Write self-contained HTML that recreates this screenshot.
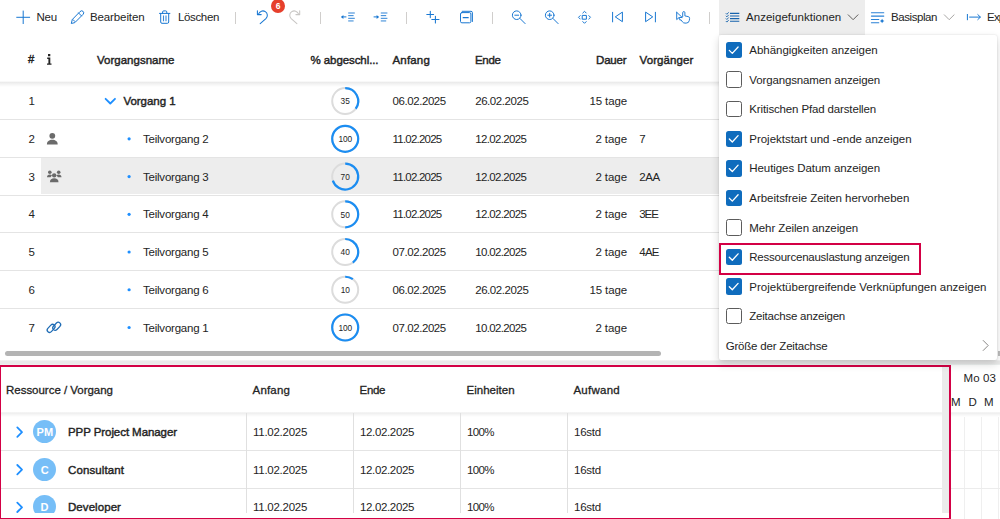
<!DOCTYPE html>
<html lang="de"><head><meta charset="utf-8"><title>Ressourcenauslastung anzeigen</title>
<style>
*{box-sizing:border-box}
html,body{margin:0;padding:0}
body{width:1000px;height:519px;overflow:hidden;position:relative;background:#fff;font-family:"Liberation Sans",sans-serif;color:#242424}
.abs,.t{position:absolute}
.t{line-height:16px;white-space:nowrap}
.sb{-webkit-text-stroke:0.42px currentColor}
.lh{-webkit-text-stroke:0.3px currentColor}
svg{position:absolute;left:0;top:0;overflow:visible}
.sep{position:absolute;top:11.5px;width:1px;height:12px;background:#d0cecc}
.rl{position:absolute;left:0;height:1px;background:#e4e4e4}
.cb{position:absolute;left:725.5px;width:16.5px;height:16.5px;border-radius:2.5px}
.cb.on{background:#0f6cbd}
.cb.off{border:1.2px solid #5c5c5c;background:#fff}
</style></head>
<body>
<div class="abs" style="left:719px;top:0;width:145.5px;height:35px;background:#ededed"></div>
<div class="sep" style="left:234.5px"></div>
<div class="sep" style="left:320.0px"></div>
<div class="sep" style="left:405.5px"></div>
<div class="sep" style="left:491.5px"></div>
<div class="sep" style="left:708.5px"></div>
<div class="abs" style="left:271.3px;top:-0.9px;width:13.8px;height:13.8px;border-radius:50%;background:#e63f2c"></div>
<div class="abs" style="left:0;top:81.2px;width:719px;height:6px;background:linear-gradient(#fff 0,#ebebeb 24%,#f3f3f3 50%,#fff 100%)"></div>
<div class="abs" style="left:41px;top:157.60px;width:678px;height:36.90px;background:#ededed"></div>
<div class="rl" style="top:118.50px;width:719px"></div>
<div class="rl" style="top:156.60px;width:719px"></div>
<div class="rl" style="top:194.50px;width:719px"></div>
<div class="rl" style="top:232.30px;width:719px"></div>
<div class="rl" style="top:270.20px;width:719px"></div>
<div class="rl" style="top:308.00px;width:719px"></div>
<div class="abs" style="left:5.2px;top:350.8px;width:656px;height:4.9px;border-radius:2.5px;background:#b4b4b4"></div>
<div class="abs" style="left:0;top:360.2px;width:1000px;height:5px;background:linear-gradient(#f6f6f6,#eaeaea 25%,#eaeaea 80%,#f0f7f5)"></div>
<div class="abs" style="left:950px;top:366px;width:50px;height:153px;background:#fff"></div>
<div class="abs" style="left:964.2px;top:413px;width:1px;height:106px;background:#efefef"></div>
<div class="abs" style="left:980.8px;top:413px;width:1px;height:106px;background:#efefef"></div>
<div class="abs" style="left:997.5px;top:413px;width:1px;height:106px;background:#efefef"></div>
<div class="abs" style="left:997.5px;top:351px;width:3px;height:4.6px;background:#bdbdbd"></div>
<div class="abs" style="left:0;top:365px;width:950.5px;height:153.5px;background:#fff"></div>
<div class="abs" style="left:0;top:412.4px;width:943px;height:5px;background:linear-gradient(#fff 0,#ededed 16%,#f5f5f5 50%,#fff 100%)"></div>
<div class="abs" style="left:950px;top:412.4px;width:50px;height:5px;background:linear-gradient(#fff 0,#ededed 16%,#f5f5f5 50%,#fff 100%)"></div>
<div class="rl" style="top:449.7px;width:943px"></div>
<div class="rl" style="top:449.7px;left:950px;width:50px;background:#ececec"></div>
<div class="rl" style="top:487.7px;width:943px"></div>
<div class="rl" style="top:487.7px;left:950px;width:50px;background:#ececec"></div>
<div class="abs" style="left:245.9px;top:413px;width:1px;height:100px;background:#e0e0e0"></div>
<div class="abs" style="left:353.1px;top:413px;width:1px;height:100px;background:#e0e0e0"></div>
<div class="abs" style="left:459.9px;top:413px;width:1px;height:100px;background:#e0e0e0"></div>
<div class="abs" style="left:566.9px;top:413px;width:1px;height:100px;background:#e0e0e0"></div>
<div class="abs" style="left:942.2px;top:366px;width:6.4px;height:151px;background:#ebebeb"></div>
<div class="abs" role="region" aria-label="Ressourcenauslastung" style="left:0;top:0;width:950px;height:513px;overflow:hidden"><div class="abs" style="left:33px;top:420.10px;width:23.2px;height:23.2px;border-radius:50%;background:#76bef7"></div><div class="abs" style="left:33px;top:457.70px;width:23.2px;height:23.2px;border-radius:50%;background:#76bef7"></div><div class="abs" style="left:33px;top:495.30px;width:23.2px;height:23.2px;border-radius:50%;background:#76bef7"></div><span class="t sb" style="left:68.0px;top:424.13px;font-size:11.5px;letter-spacing:-0.072px;">PPP Project Manager</span><span class="t" style="left:253.0px;top:424.13px;font-size:11.5px;letter-spacing:-0.270px;">11.02.2025</span><span class="t" style="left:360.0px;top:424.13px;font-size:11.5px;letter-spacing:-0.356px;">12.02.2025</span><span class="t" style="left:467.0px;top:424.13px;font-size:11.5px;letter-spacing:-0.605px;">100%</span><span class="t" style="left:574.0px;top:424.13px;font-size:11.5px;letter-spacing:-0.228px;">16std</span><span class="t" style="left:36.5px;top:424.23px;font-size:11px;font-weight:700;color:#fff;letter-spacing:0.150px;">PM</span><span class="t sb" style="left:68.0px;top:461.73px;font-size:11.5px;letter-spacing:0.102px;">Consultant</span><span class="t" style="left:253.0px;top:461.73px;font-size:11.5px;letter-spacing:-0.270px;">11.02.2025</span><span class="t" style="left:360.0px;top:461.73px;font-size:11.5px;letter-spacing:-0.356px;">12.02.2025</span><span class="t" style="left:467.0px;top:461.73px;font-size:11.5px;letter-spacing:-0.605px;">100%</span><span class="t" style="left:574.0px;top:461.73px;font-size:11.5px;letter-spacing:-0.228px;">16std</span><span class="t" style="left:40.7px;top:461.83px;font-size:11px;font-weight:700;color:#fff;">C</span><span class="t sb" style="left:68.0px;top:499.33px;font-size:11.5px;letter-spacing:0.064px;">Developer</span><span class="t" style="left:253.0px;top:499.33px;font-size:11.5px;letter-spacing:-0.270px;">11.02.2025</span><span class="t" style="left:360.0px;top:499.33px;font-size:11.5px;letter-spacing:-0.356px;">12.02.2025</span><span class="t" style="left:467.0px;top:499.33px;font-size:11.5px;letter-spacing:-0.605px;">100%</span><span class="t" style="left:574.0px;top:499.33px;font-size:11.5px;letter-spacing:-0.228px;">16std</span><span class="t" style="left:40.5px;top:499.43px;font-size:11px;font-weight:700;color:#fff;">D</span></div>
<div class="abs" style="left:1.5px;top:513px;width:947px;height:4px;background:#fff"></div>
<div class="abs" style="left:-1px;top:364.9px;width:952px;height:154.7px;border:2px solid #d30045"></div>
<div class="abs" style="left:719px;top:35px;width:277.5px;height:325px;background:#fff;border-radius:2px;box-shadow:0 0 2px rgba(0,0,0,.14),0 4px 9px rgba(0,0,0,.16)"></div>
<div class="cb on" style="top:41.88px"></div>
<div class="cb off" style="top:71.43px"></div>
<div class="cb off" style="top:100.98px"></div>
<div class="cb on" style="top:130.53px"></div>
<div class="cb on" style="top:160.08px"></div>
<div class="cb on" style="top:189.63px"></div>
<div class="cb off" style="top:219.18px"></div>
<div class="cb on" style="top:248.72px"></div>
<div class="cb on" style="top:278.27px"></div>
<div class="cb off" style="top:307.82px"></div>
<div class="abs" style="left:718.9px;top:243px;width:201.9px;height:32.4px;border:2px solid #d30045"></div>
<div role="toolbar" aria-label="Werkzeugleiste"><span class="t" style="left:36.5px;top:9.43px;font-size:11.5px;letter-spacing:-0.203px;">Neu</span><span class="t" style="left:90.0px;top:9.43px;font-size:11.5px;letter-spacing:-0.113px;">Bearbeiten</span><span class="t" style="left:178.0px;top:9.43px;font-size:11.5px;letter-spacing:-0.355px;">Löschen</span><span class="t" style="left:746.0px;top:9.43px;font-size:11.5px;letter-spacing:0.039px;">Anzeigefunktionen</span><span class="t" style="left:891.0px;top:9.43px;font-size:11.5px;letter-spacing:-0.431px;">Basisplan</span><span class="t" style="left:987.0px;top:9.43px;font-size:11.5px;letter-spacing:-0.792px;">Export</span><span class="t" style="left:275.8px;top:-1.60px;font-size:8.5px;font-weight:700;color:#fff;">6</span></div>
<div role="grid" aria-label="Vorgänge"><span class="t sb" style="left:28.0px;top:50.83px;font-size:11.3px;">#</span><span class="t sb" style="left:97.0px;top:51.53px;font-size:11.5px;letter-spacing:0.010px;">Vorgangsname</span><span class="t sb" style="left:310.5px;top:51.53px;font-size:11.5px;letter-spacing:-0.081px;">% abgeschl...</span><span class="t sb" style="left:392.5px;top:51.53px;font-size:11.5px;letter-spacing:0.174px;">Anfang</span><span class="t sb" style="left:475.0px;top:51.53px;font-size:11.5px;letter-spacing:-0.340px;">Ende</span><span class="t sb" style="left:596.0px;top:51.53px;font-size:11.5px;letter-spacing:-0.166px;">Dauer</span><span class="t sb" style="left:639.5px;top:51.53px;font-size:11.5px;letter-spacing:0.102px;">Vorgänger</span><span class="t" style="left:28.5px;top:93.23px;font-size:11.5px;">1</span><span class="t sb" style="left:123.5px;top:93.23px;font-size:11.5px;letter-spacing:-0.049px;">Vorgang 1</span><span class="t" style="left:392.6px;top:93.23px;font-size:11.5px;letter-spacing:-0.436px;">06.02.2025</span><span class="t" style="left:475.2px;top:93.23px;font-size:11.5px;letter-spacing:-0.436px;">26.02.2025</span><span class="t" style="left:589.5px;top:93.23px;font-size:11.5px;letter-spacing:-0.125px;">15 tage</span><span class="t" style="left:340.4px;top:93.40px;font-size:8.3px;letter-spacing:0.133px;">35</span><span class="t" style="left:28.5px;top:130.96px;font-size:11.5px;">2</span><span class="t" style="left:143.0px;top:130.96px;font-size:11.5px;letter-spacing:-0.224px;">Teilvorgang 2</span><span class="t" style="left:392.6px;top:130.96px;font-size:11.5px;letter-spacing:-0.790px;">11.02.2025</span><span class="t" style="left:475.2px;top:130.96px;font-size:11.5px;letter-spacing:-0.636px;">12.02.2025</span><span class="t" style="left:595.4px;top:130.96px;font-size:11.5px;letter-spacing:-0.064px;">2 tage</span><span class="t" style="left:639.3px;top:130.96px;font-size:11.5px;">7</span><span class="t" style="left:338.4px;top:131.13px;font-size:8.3px;letter-spacing:-0.115px;">100</span><span class="t" style="left:28.5px;top:168.69px;font-size:11.5px;">3</span><span class="t" style="left:143.0px;top:168.69px;font-size:11.5px;letter-spacing:-0.224px;">Teilvorgang 3</span><span class="t" style="left:392.6px;top:168.69px;font-size:11.5px;letter-spacing:-0.790px;">11.02.2025</span><span class="t" style="left:475.2px;top:168.69px;font-size:11.5px;letter-spacing:-0.636px;">12.02.2025</span><span class="t" style="left:595.4px;top:168.69px;font-size:11.5px;letter-spacing:-0.064px;">2 tage</span><span class="t" style="left:639.3px;top:168.69px;font-size:11.5px;letter-spacing:-0.417px;">2AA</span><span class="t" style="left:340.4px;top:168.86px;font-size:8.3px;letter-spacing:0.133px;">70</span><span class="t" style="left:28.5px;top:206.42px;font-size:11.5px;">4</span><span class="t" style="left:143.0px;top:206.42px;font-size:11.5px;letter-spacing:-0.224px;">Teilvorgang 4</span><span class="t" style="left:392.6px;top:206.42px;font-size:11.5px;letter-spacing:-0.790px;">11.02.2025</span><span class="t" style="left:475.2px;top:206.42px;font-size:11.5px;letter-spacing:-0.636px;">12.02.2025</span><span class="t" style="left:595.4px;top:206.42px;font-size:11.5px;letter-spacing:-0.064px;">2 tage</span><span class="t" style="left:639.3px;top:206.42px;font-size:11.5px;letter-spacing:-1.083px;">3EE</span><span class="t" style="left:340.4px;top:206.59px;font-size:8.3px;letter-spacing:0.133px;">50</span><span class="t" style="left:28.5px;top:244.15px;font-size:11.5px;">5</span><span class="t" style="left:143.0px;top:244.15px;font-size:11.5px;letter-spacing:-0.224px;">Teilvorgang 5</span><span class="t" style="left:392.6px;top:244.15px;font-size:11.5px;letter-spacing:-0.436px;">07.02.2025</span><span class="t" style="left:475.2px;top:244.15px;font-size:11.5px;letter-spacing:-0.636px;">10.02.2025</span><span class="t" style="left:595.4px;top:244.15px;font-size:11.5px;letter-spacing:-0.064px;">2 tage</span><span class="t" style="left:639.3px;top:244.15px;font-size:11.5px;letter-spacing:-0.750px;">4AE</span><span class="t" style="left:340.4px;top:244.32px;font-size:8.3px;letter-spacing:0.133px;">40</span><span class="t" style="left:28.5px;top:281.88px;font-size:11.5px;">6</span><span class="t" style="left:143.0px;top:281.88px;font-size:11.5px;letter-spacing:-0.224px;">Teilvorgang 6</span><span class="t" style="left:392.6px;top:281.88px;font-size:11.5px;letter-spacing:-0.436px;">06.02.2025</span><span class="t" style="left:475.2px;top:281.88px;font-size:11.5px;letter-spacing:-0.436px;">26.02.2025</span><span class="t" style="left:589.5px;top:281.88px;font-size:11.5px;letter-spacing:-0.125px;">15 tage</span><span class="t" style="left:340.7px;top:282.05px;font-size:8.3px;letter-spacing:-0.117px;">10</span><span class="t" style="left:28.5px;top:319.61px;font-size:11.5px;">7</span><span class="t" style="left:143.0px;top:319.61px;font-size:11.5px;letter-spacing:-0.224px;">Teilvorgang 1</span><span class="t" style="left:392.6px;top:319.61px;font-size:11.5px;letter-spacing:-0.436px;">07.02.2025</span><span class="t" style="left:475.2px;top:319.61px;font-size:11.5px;letter-spacing:-0.636px;">10.02.2025</span><span class="t" style="left:595.4px;top:319.61px;font-size:11.5px;letter-spacing:-0.064px;">2 tage</span><span class="t" style="left:338.4px;top:319.78px;font-size:8.3px;letter-spacing:-0.115px;">100</span></div>
<div aria-label="Zeitachse"><span class="t lh" style="left:6.0px;top:382.43px;font-size:11.5px;letter-spacing:-0.021px;">Ressource / Vorgang</span><span class="t lh" style="left:252.6px;top:382.43px;font-size:11.5px;letter-spacing:0.158px;">Anfang</span><span class="t lh" style="left:359.6px;top:382.43px;font-size:11.5px;letter-spacing:-0.365px;">Ende</span><span class="t lh" style="left:466.6px;top:382.43px;font-size:11.5px;">Einheiten</span><span class="t lh" style="left:573.4px;top:382.43px;font-size:11.5px;letter-spacing:0.262px;">Aufwand</span><span class="t" style="left:963.6px;top:370.33px;font-size:11.5px;letter-spacing:0.086px;">Mo 03</span><span class="t" style="left:951.0px;top:393.83px;font-size:11.5px;">M</span><span class="t" style="left:968.5px;top:393.83px;font-size:11.5px;">D</span><span class="t" style="left:984.0px;top:393.83px;font-size:11.5px;">M</span></div>
<div role="menu" aria-label="Anzeigefunktionen"><span class="t" style="left:749.3px;top:42.21px;font-size:11.5px;letter-spacing:-0.034px;">Abhängigkeiten anzeigen</span><span class="t" style="left:749.3px;top:71.76px;font-size:11.5px;letter-spacing:-0.134px;">Vorgangsnamen anzeigen</span><span class="t" style="left:749.3px;top:101.31px;font-size:11.5px;letter-spacing:-0.143px;">Kritischen Pfad darstellen</span><span class="t" style="left:749.3px;top:130.86px;font-size:11.5px;letter-spacing:-0.024px;">Projektstart und -ende anzeigen</span><span class="t" style="left:749.3px;top:160.41px;font-size:11.5px;letter-spacing:-0.071px;">Heutiges Datum anzeigen</span><span class="t" style="left:749.3px;top:189.96px;font-size:11.5px;letter-spacing:-0.035px;">Arbeitsfreie Zeiten hervorheben</span><span class="t" style="left:749.3px;top:219.51px;font-size:11.5px;letter-spacing:-0.095px;">Mehr Zeilen anzeigen</span><span class="t" style="left:749.3px;top:249.06px;font-size:11.5px;letter-spacing:-0.237px;">Ressourcenauslastung anzeigen</span><span class="t" style="left:749.3px;top:278.61px;font-size:11.5px;">Projektübergreifende Verknüpfungen anzeigen</span><span class="t" style="left:749.3px;top:308.16px;font-size:11.5px;letter-spacing:-0.224px;">Zeitachse anzeigen</span><span class="t" style="left:725.7px;top:337.71px;font-size:11.5px;letter-spacing:-0.198px;">Größe der Zeitachse</span></div>
<svg width="1000" height="519" viewBox="0 0 1000 519" fill="none" stroke-linecap="round" stroke-linejoin="round"><path stroke="#1877d2" stroke-width="1" d="M23.2 11v12.6M16.7 17.3h13"/><path stroke="#1877d2" stroke-width="1" d="M80.2 11.4a2 2 0 0 1 2.9 2.9l-8.2 8.3-3.6 0.9 0.9-3.6zM78.6 13l2.9 2.9M73 19.6l1.9 1.9"/><path stroke="#1877d2" stroke-width="1" d="M159.5 13.4h10.4M162.6 13.2v-1.2a1.1 1.1 0 0 1 1.1-1.1h2a1.1 1.1 0 0 1 1.1 1.1v1.2M160.7 13.6v8.4a1.3 1.3 0 0 0 1.3 1.3h5.4a1.3 1.3 0 0 0 1.3-1.3v-8.4"/><path stroke="#1877d2" stroke-width="1.1" stroke-linecap="butt" opacity=".85" d="M163.500 15.500v5.800M166 15.500v5.800"/><path stroke="#1877d2" stroke-width="1.05" d="M257.4 10.8V14.6H261.2M258.6 13.9A4.5 4.5 0 1 1 265.9 18.7L260.2 23.600"/><path stroke="#c8c6c4" stroke-width="1.05" d="M299.700 10.8V14.6H295.900M298.500 13.9A4.5 4.5 0 1 0 291.200 18.7L296.900 23.600"/><path stroke="#1877d2" stroke-width="1" stroke-linecap="butt" opacity=".9" d="M348.2 13h6.600M348.2 15.650h5.400M348.2 18.300h6.600M348.2 20.950h5.400"/><path stroke="#1877d2" stroke-width="1" d="M342 16.900h4"/><path fill="#1877d2" stroke="none" d="M341 16.900l2.400-2v4z"/><path stroke="#1877d2" stroke-width="1" stroke-linecap="butt" opacity=".9" d="M380.800 13h6.600M380.800 15.650h5.400M380.800 18.300h6.600M380.800 20.950h5.400"/><path stroke="#1877d2" stroke-width="1" d="M374 16.900h4"/><path fill="#1877d2" stroke="none" d="M379 16.900l-2.400-2v4z"/><path stroke="#1877d2" stroke-width="1.05" d="M430.300 11.200v6.400M426.800 14.400h6.800M435.400 16.200v6.800M431.800 19.400h7.200"/><path stroke="#1877d2" stroke-width="1" d="M462.200 11.300h8.800a1.400 1.400 0 0 1 1.400 1.400v8.800"/><rect stroke="#1877d2" stroke-width="1" x="460.500" y="12.600" width="10.400" height="10.200" rx="1.400"/><path stroke="#1877d2" stroke-width="1.2" d="M463.200 17.700h5"/><circle stroke="#1877d2" stroke-width="1" cx="516.700" cy="15.200" r="4.300"/><path stroke="#1877d2" stroke-width="1" d="M519.900 18.400l5.200 5.200M514.800 15.200h3.800"/><circle stroke="#1877d2" stroke-width="1" cx="549.700" cy="15.200" r="4.300"/><path stroke="#1877d2" stroke-width="1" d="M552.900 18.400l5.200 5.200M547.800 15.200h3.800M549.700 13.300v3.800"/><rect stroke="#1877d2" stroke-width="1" x="582.600" y="15.400" width="3.800" height="3.800"/><path stroke="#1877d2" stroke-width="1" d="M582.800 13l1.700-1.700 1.700 1.700M582.800 21.600l1.700 1.700 1.700-1.700M580.200 15.600l-1.700 1.700 1.700 1.700M588.800 15.600l1.700 1.700-1.700 1.700"/><path stroke="#1877d2" stroke-width="1" d="M612.600 12.300v9.600M622.400 12.500v9.200l-6.800-4.600z"/><path stroke="#1877d2" stroke-width="1" d="M655.400 12.300v9.600M645.600 12.500v9.200l6.800-4.600z"/><path stroke="#1877d2" stroke-width="0.95" d="M676.7 12.3v7.3l2.2-1.9 1.2 2.5M676.7 12.3l5.6 5.2h-2.800"/><path stroke="#1877d2" stroke-width="0.95" d="M682.7 16.6v-3.9a1.1 1.1 0 0 1 2.2 0v3.200l3.3 0.7a1.8 1.8 0 0 1 1.4 2l-0.3 1.9a3.1 3.1 0 0 1-3.1 2.6h-1.200a3.2 3.2 0 0 1-2.5-1.2l-1.700-2.200"/><path stroke="#1763ad" stroke-width="1.15" stroke-linecap="butt" d="M730 13.400h9.300M730 16h9.300M730 18.600h9.300M730 21.200h9.300"/><path stroke="#1763ad" stroke-width="0.900" d="M726.100 13.500l0.800 0.800 1.500-1.700M726.100 16.100l0.800 0.800 1.500-1.700M726.100 18.700l0.800 0.800 1.500-1.700M726.100 21.300l0.800 0.800 1.500-1.700"/><path stroke="#605e5c" stroke-width="1" d="M848.200 14.800l4.900 4.900 4.900-4.900"/><path stroke="#a8a6a4" stroke-width="1" d="M944.300 14.800l4.900 4.900 4.900-4.900"/><path stroke="#1877d2" stroke-width="1.05" opacity=".92" d="M871.400 12.700h12.400M871.400 16.100h12.400M871.400 19.500h7.400M871.400 22.650h7.400"/><path fill="#1877d2" stroke="none" d="M882.100 18.700l0.800 1.500 1.500 0.800-1.500 0.800-0.800 1.500-0.800-1.500-1.500-0.800 1.500-0.800z"/><path stroke="#1877d2" stroke-width="1" d="M967.400 14.400v5.400M969.600 17.100h10.600M977.800 14.600l2.600 2.500-2.600 2.500"/><path fill="#242424" stroke="none" d="M48 54h2.300v2.300h-2.300zM47.200 57.600h3.100v5.900h1.200v1.300h-4.500v-1.300h1.400v-4.600h-1.200z"/><circle cx="345.2" cy="101.10" r="13" stroke="#dcdcdc" stroke-width="2"/><path stroke="#1b8df2" stroke-width="2.200" stroke-linecap="butt" d="M345.2 88.10A13 13 0 0 1 355.72 108.74"/><circle cx="345.2" cy="138.83" r="13" stroke="#dcdcdc" stroke-width="2"/><circle cx="345.2" cy="138.83" r="13" stroke="#1b8df2" stroke-width="2.200"/><circle cx="345.2" cy="176.56" r="13" stroke="#dcdcdc" stroke-width="2"/><path stroke="#1b8df2" stroke-width="2.200" stroke-linecap="butt" d="M345.2 163.56A13 13 0 1 1 332.84 180.58"/><circle cx="345.2" cy="214.29" r="13" stroke="#dcdcdc" stroke-width="2"/><path stroke="#1b8df2" stroke-width="2.200" stroke-linecap="butt" d="M345.2 201.29A13 13 0 0 1 345.20 227.29"/><circle cx="345.2" cy="252.02" r="13" stroke="#dcdcdc" stroke-width="2"/><path stroke="#1b8df2" stroke-width="2.200" stroke-linecap="butt" d="M345.2 239.02A13 13 0 0 1 352.84 262.54"/><circle cx="345.2" cy="289.75" r="13" stroke="#dcdcdc" stroke-width="2"/><path stroke="#1b8df2" stroke-width="2.200" stroke-linecap="butt" d="M345.2 276.75A13 13 0 0 1 352.84 279.23"/><circle cx="345.2" cy="327.48" r="13" stroke="#dcdcdc" stroke-width="2"/><circle cx="345.2" cy="327.48" r="13" stroke="#1b8df2" stroke-width="2.200"/><path stroke="#1e8fff" stroke-width="1.800" d="M105.600 98.80l4.700 4.700 4.700-4.700"/><circle cx="129.100" cy="138.83" r="1.600" fill="#1e8fff" stroke="none"/><circle cx="129.100" cy="176.56" r="1.600" fill="#1e8fff" stroke="none"/><circle cx="129.100" cy="214.29" r="1.600" fill="#1e8fff" stroke="none"/><circle cx="129.100" cy="252.02" r="1.600" fill="#1e8fff" stroke="none"/><circle cx="129.100" cy="289.75" r="1.600" fill="#1e8fff" stroke="none"/><circle cx="129.100" cy="327.48" r="1.600" fill="#1e8fff" stroke="none"/><g fill="#6b6b6b" stroke="none"><circle cx="52.3" cy="135.83" r="2.9"/><path d="M46.9 144.43c0-3.2 2.400-4.700 5.400-4.700s5.400 1.500 5.400 4.700z"/></g><g fill="#6b6b6b" stroke="none"><circle cx="49.8" cy="172.26" r="1.800"/><circle cx="58.7" cy="172.26" r="1.800"/><path d="M47 177.16c0-1.900 1.200-2.700 2.800-2.700 0.900 0 1.700 0.300 2.200 0.800l-1.400 1.900zM61.500 177.16c0-1.900-1.200-2.700-2.800-2.700-0.900 0-1.700 0.300-2.200 0.800l1.400 1.900z"/><circle cx="54.2" cy="175.36" r="2.200"/><path d="M49.900 182.16c0-2.700 1.900-3.800 4.300-3.800s4.300 1.100 4.300 3.800z"/></g><g stroke="#1f6cb5" stroke-width="1.25"><rect x="-4.6" y="-2.4" width="9.2" height="4.8" rx="2.4" transform="translate(51.1 328.38) rotate(-47)"/><rect x="-4.6" y="-2.4" width="9.2" height="4.8" rx="2.4" transform="translate(56.7 326.28) rotate(-47)"/></g><path stroke="#1e8fff" stroke-width="1.800" d="M17.300 427.40l4.700 4.700-4.700 4.700"/><path stroke="#1e8fff" stroke-width="1.800" d="M17.300 465.00l4.700 4.700-4.700 4.700"/><path stroke="#1e8fff" stroke-width="1.800" d="M17.300 502.60l4.700 4.700-4.700 4.700"/><path stroke="#fff" stroke-width="1.300" d="M729.300 50.38l3 3 5.800-6.400"/><path stroke="#fff" stroke-width="1.300" d="M729.300 139.03l3 3 5.800-6.400"/><path stroke="#fff" stroke-width="1.300" d="M729.300 168.58l3 3 5.800-6.400"/><path stroke="#fff" stroke-width="1.300" d="M729.300 198.13l3 3 5.800-6.400"/><path stroke="#fff" stroke-width="1.300" d="M729.300 257.22l3 3 5.800-6.400"/><path stroke="#fff" stroke-width="1.300" d="M729.300 286.77l3 3 5.800-6.400"/><path stroke="#8a8886" stroke-width="1" d="M983.200 340.48l5 5-5 5"/></svg>
</body></html>
